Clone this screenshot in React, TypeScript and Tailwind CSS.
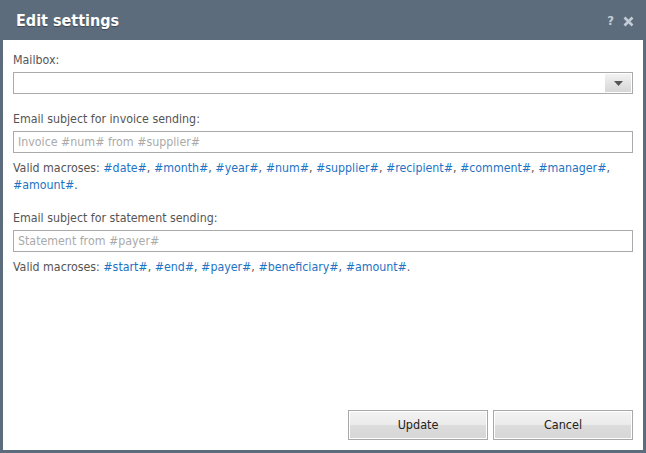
import React from "react";

const font = { fontFamily: '"DejaVu Sans Condensed", "DejaVu Sans", sans-serif' };

function Macros({ items }: { items: string[] }) {
  return (
    <p className="mt-[7px] text-[12.3px] leading-[17px] text-[#555]">
      Valid macroses:{" "}
      {items.map((m, i) => (
        <span key={m}>
          <span className="text-[#1d73c4]">{m}</span>
          {i < items.length - 1 ? ", " : "."}
        </span>
      ))}
    </p>
  );
}

function Field({ label, placeholder }: { label: string; placeholder: string }) {
  return (
    <div>
      <label className="block text-[12.3px] leading-[17px] text-[#555]">{label}</label>
      <input
        placeholder={placeholder}
        className="mt-[3px] block w-full h-[22px] border border-[#aaaaaa] bg-white px-[4px] text-[12.3px] text-[#333] placeholder:text-[#aaaaaa] outline-none"
      />
    </div>
  );
}

function Btn({ children }: { children: React.ReactNode }) {
  return (
    <button className="w-[140px] h-[30px] border border-[#a8a8a8] text-[12.5px] text-[#222] bg-[linear-gradient(to_bottom,#f3f3f3_0%,#ebebeb_48%,#dcdcdc_52%,#d6d6d6_100%)] shadow-[inset_0_0_0_1px_#ffffff]">
      {children}
    </button>
  );
}

export default function App() {
  return (
    <div style={font} className="w-[646px] h-[453px] bg-[#5c6c7d] flex flex-col px-[3px] pb-[3px]">
      <div className="h-[40px] flex items-center justify-between pl-[13px] pr-[9px] pt-[2px]">
        <h1 className="text-[16px] font-bold text-white [text-shadow:0_1px_1px_rgba(0,0,0,0.35)]">Edit settings</h1>
        <div className="flex items-center gap-[9px] text-[#c3ccd6] font-bold">
          <span className="text-[13px]">?</span>
          <svg width="11" height="11" viewBox="0 0 11 11">
            <path d="M1.5 1.5L9.5 9.5M9.5 1.5L1.5 9.5" stroke="#c3ccd6" strokeWidth="2.6" />
          </svg>
        </div>
      </div>
      <div className="flex-1 bg-white flex flex-col pl-[10px] pr-[10px] pt-[12px] pb-[10px]">
        <div>
          <label className="block text-[12.3px] leading-[17px] text-[#555]">Mailbox:</label>
          <div className="mt-[3px] h-[22px] border border-[#aaaaaa] flex justify-end p-[1px]">
            <div className="w-[26px] h-full bg-[linear-gradient(to_bottom,#f2f2f2,#d6d6d6)] flex items-center justify-center">
              <svg width="9" height="5" viewBox="0 0 9 5">
                <path d="M0 0H9L4.5 5Z" fill="#555" />
              </svg>
            </div>
          </div>
        </div>
        <div className="mt-[17px]">
          <Field label="Email subject for invoice sending:" placeholder="Invoice #num# from #supplier#" />
          <Macros
            items={["#date#", "#month#", "#year#", "#num#", "#supplier#", "#recipient#", "#comment#", "#manager#", "#amount#"]}
          />
        </div>
        <div className="mt-[16px]">
          <Field label="Email subject for statement sending:" placeholder="Statement from #payer#" />
          <Macros items={["#start#", "#end#", "#payer#", "#beneficiary#", "#amount#"]} />
        </div>
        <div className="mt-auto flex justify-end gap-[5px]">
          <Btn>Update</Btn>
          <Btn>Cancel</Btn>
        </div>
      </div>
    </div>
  );
}
